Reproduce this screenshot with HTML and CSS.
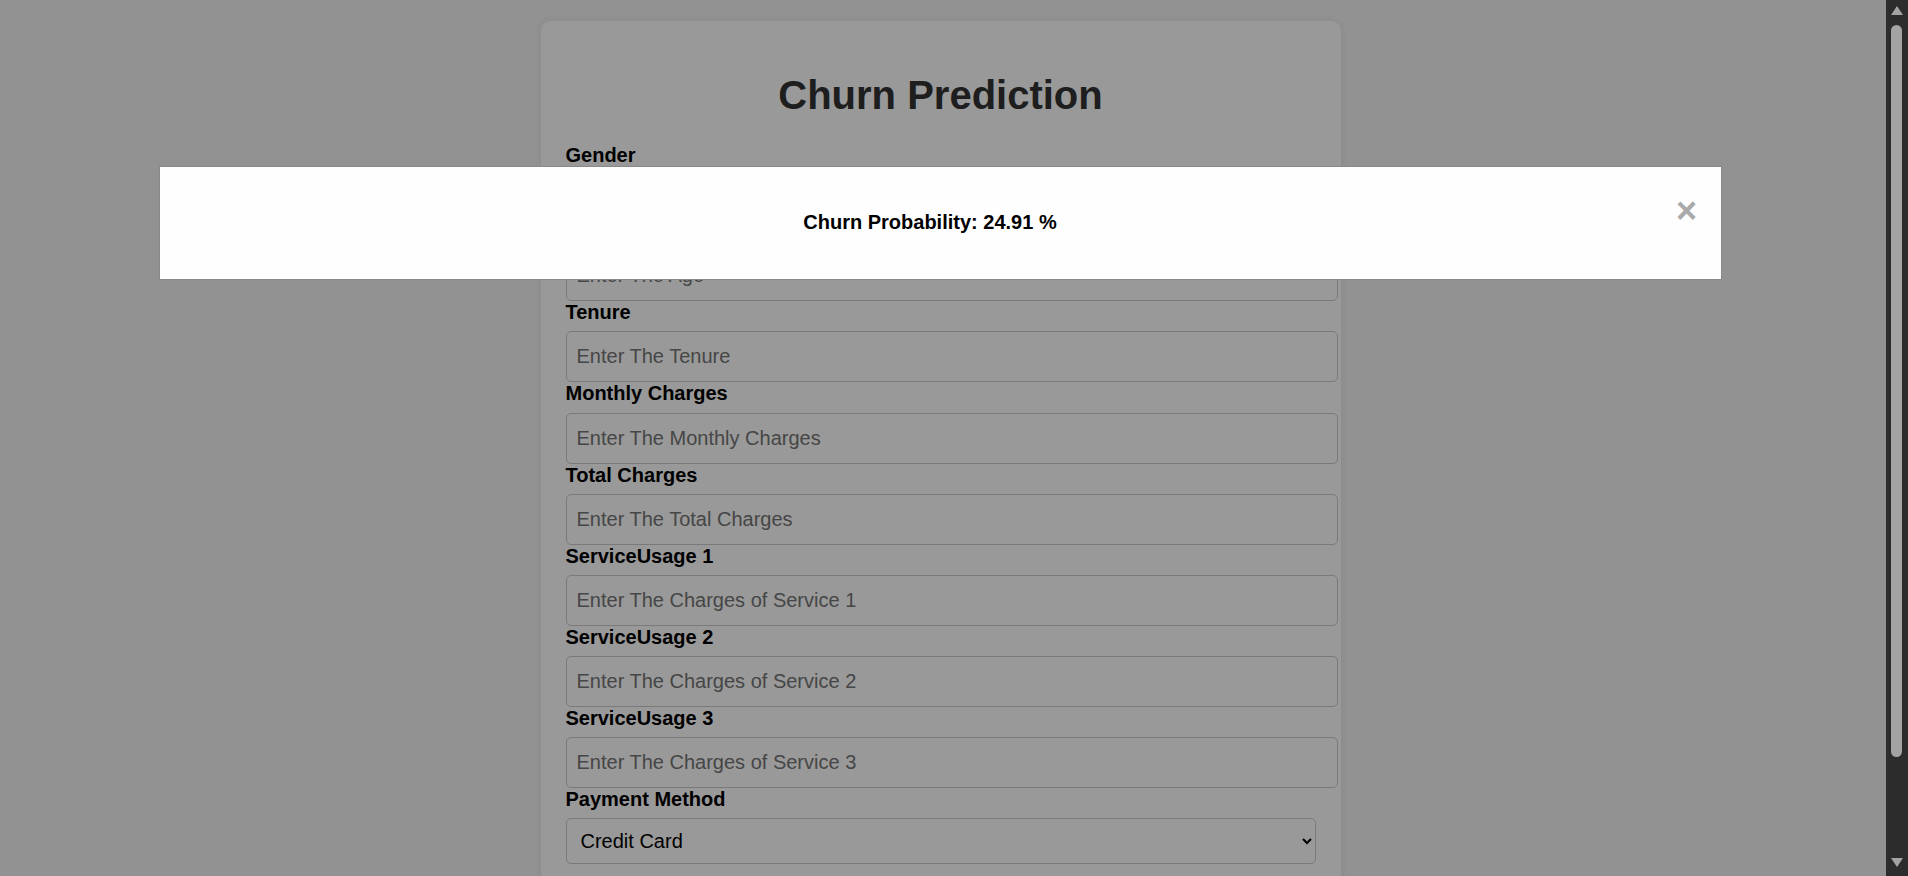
FILE: index.html
```html
<!DOCTYPE html>
<html lang="en">
<head>
<meta charset="utf-8">
<title>Churn Prediction</title>
<link rel="stylesheet" href="styles.css">
</head>
<body>
<div class="page">
  <div class="card">
    <h1 class="title">Churn Prediction</h1>
    <form class="form">
      <div class="field">
        <label class="label">Gender</label>
        <select class="select"><option>Male</option><option>Female</option></select>
      </div>
      <div class="field">
        <label class="label">Age</label>
        <input class="input" type="text" placeholder="Enter The Age">
      </div>
      <div class="field">
        <label class="label">Tenure</label>
        <input class="input" type="text" placeholder="Enter The Tenure">
      </div>
      <div class="field">
        <label class="label">Monthly Charges</label>
        <input class="input" type="text" placeholder="Enter The Monthly Charges">
      </div>
      <div class="field">
        <label class="label">Total Charges</label>
        <input class="input" type="text" placeholder="Enter The Total Charges">
      </div>
      <div class="field">
        <label class="label">ServiceUsage 1</label>
        <input class="input" type="text" placeholder="Enter The Charges of Service 1">
      </div>
      <div class="field">
        <label class="label">ServiceUsage 2</label>
        <input class="input" type="text" placeholder="Enter The Charges of Service 2">
      </div>
      <div class="field">
        <label class="label">ServiceUsage 3</label>
        <input class="input" type="text" placeholder="Enter The Charges of Service 3">
      </div>
      <div class="field">
        <label class="label">Payment Method</label>
        <select class="select"><option>Credit Card</option><option>Bank Transfer</option></select>
      </div>
    </form>
  </div>
  <div class="overlay">
    <div class="modal">
      <span class="close">&times;</span>
      <p class="result">Churn Probability: 24.91 %</p>
    </div>
  </div>
</div>
<div class="scrollbar">
  <div class="arrow arrow-up"></div>
  <div class="thumb-track"><div class="thumb"></div></div>
  <div class="arrow arrow-down"></div>
</div>
</body>
</html>
```
FILE: styles.css
```css
html, body {
  margin: 0;
  padding: 0;
  height: 876px;
  overflow: hidden;
}
body {
  display: flex;
  font-family: "Liberation Sans", Arial, sans-serif;
  font-size: 20px;
  background: #f4f4f4;
}
.page {
  flex: 1;
  position: relative;
  overflow: hidden;
  padding-right: 5px;
  background: #f4f4f4;
}
.card {
  width: 750px;
  height: 900px;
  padding: 25px;
  margin: 21px auto 0;
  background: #ffffff;
  border-radius: 10px;
  box-shadow: 0 0 10px rgba(0, 0, 0, 0.08);
}
.title {
  font-size: 40px;
  font-weight: bold;
  text-align: center;
  color: #333333;
  margin: 27px 0 26px;
  line-height: normal;
}
.field {
  display: block;
}
.label {
  display: block;
  font-weight: bold;
  color: #000;
  margin-bottom: 7.15px;
}
.input {
  display: block;
  width: 100%;
  padding: 13px 10px;
  font-family: inherit;
  font-size: 20px;
  border: 1px solid #cccccc;
  border-radius: 5px;
  background: #fff;
  margin: 0;
}
.select {
  display: block;
  width: 100%;
  padding: 10px;
  font-family: inherit;
  font-size: 20px;
  border: 1px solid #cccccc;
  border-radius: 5px;
  background: #fff;
  color: #000;
  margin: 0;
}
.overlay {
  position: absolute;
  inset: 0;
  padding: 166px 5px 0 0;
  background: rgba(0, 0, 0, 0.4);
}
.modal {
  width: 1521px;
  margin: 0 auto;
  padding: 20px;
  border: 1px solid #888888;
  background: #fefefe;
}
.close {
  float: right;
  color: #aaaaaa;
  font-size: 36px;
  font-weight: bold;
  margin-top: 3px;
  margin-right: 4px;
  margin-left: -4px;
}
.result {
  margin: 24px 0 25px;
  text-align: center;
  font-weight: bold;
  font-size: 20px;
  color: #000;
}
.scrollbar {
  width: 22px;
  flex: none;
  background: #2c2c2c;
  display: flex;
  flex-direction: column;
  align-items: center;
  padding: 6px 0 9px;
  box-sizing: border-box;
}
.arrow {
  width: 0;
  height: 0;
  border-left: 6px solid transparent;
  border-right: 6px solid transparent;
  flex: none;
  margin-left: -1px;
}
.arrow-up {
  border-bottom: 9px solid #a3a3a3;
}
.arrow-down {
  border-top: 9px solid #a3a3a3;
}
.thumb-track {
  flex: 1;
  width: 100%;
  display: flex;
  justify-content: center;
  padding-top: 10px;
  box-sizing: border-box;
}
.thumb {
  width: 11px;
  height: 732px;
  margin-left: -1px;
  border-radius: 6px;
  background: #a3a3a3;
}
```
